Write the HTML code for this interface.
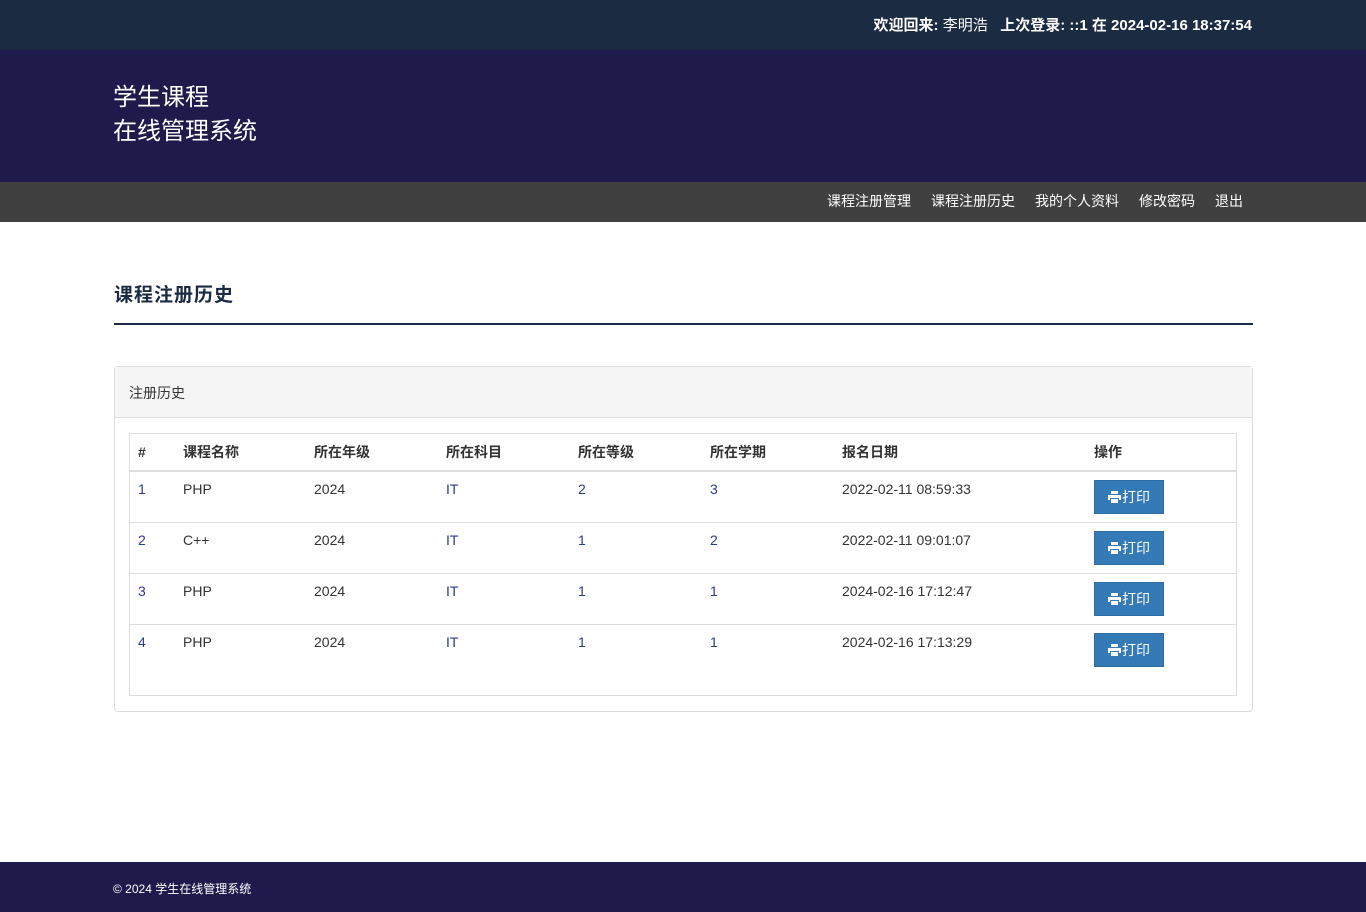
<!DOCTYPE html>
<html><head><meta charset="utf-8"><style>
*{box-sizing:border-box;margin:0;padding:0}
body{width:1366px;height:912px;font-family:"Liberation Sans","Noto Sans CJK SC",sans-serif;font-size:14px;color:#333;background:#fff;position:relative;overflow:hidden}
.top{height:50px;background:#1a2b42;color:#fff;font-size:15px}
.top .r{position:absolute;right:114px;top:14px;font-weight:bold}
.top .r span{font-weight:normal}
.hdr{height:132px;background:#1e1a4b;color:#fff;font-size:24px;line-height:34px;padding:31px 0 0 113px}
.nav{height:40px;background:#404040;color:#fff;font-size:14px;text-align:right;padding-right:123px;line-height:39px}
.nav span{margin-left:20px}
h2{position:absolute;left:114px;top:280px;font-size:19px;color:#1a2b42;font-weight:bold;letter-spacing:1px}
.hr{position:absolute;left:114px;top:323px;width:1139px;height:2px;background:#1a2b42}
.panel{position:absolute;left:114px;top:366px;width:1139px;height:346px;border:1px solid #ddd;border-radius:4px}
.ph{height:51px;background:#f5f5f5;border-bottom:1px solid #ddd;padding:16px 14px;font-size:14px}
.tbl{position:absolute;left:14px;top:66px;width:1108px;height:263px;border:1px solid #ddd}
table{border-collapse:collapse;width:100%}
th{text-align:left;height:37px;border-bottom:2px solid #ddd;padding:0 8px;font-size:14px;color:#333}
td{height:51px;vertical-align:top;padding:9px 8px 0;border-bottom:1px solid #ddd;font-size:14px}
tr:last-child td{border-bottom:none}
.b{color:#2a3a8a}
.btn{display:inline-block;background:#337ab7;border:1px solid #2e6da4;color:#fff;width:70px;height:34px;line-height:32px;text-align:center;margin-top:-1px}
.btn svg{vertical-align:-1px;margin-right:1px}
.foot{position:absolute;left:0;top:862px;width:1366px;height:50px;background:#1e1a4b;color:#fff;font-size:12px;padding:18px 113px}
</style></head><body>
<div class="top"><div class="r">欢迎回来: <span>李明浩</span> &nbsp; 上次登录: ::1 在 2024-02-16 18:37:54</div></div>
<div class="hdr">学生课程<br>在线管理系统</div>
<div class="nav"><span>课程注册管理</span><span>课程注册历史</span><span>我的个人资料</span><span>修改密码</span><span>退出</span></div>
<h2>课程注册历史</h2>
<div class="hr"></div>
<div class="panel"><div class="ph">注册历史</div>
<div class="tbl"><table>
<tr><th style="width:45px">#</th><th style="width:131px">课程名称</th><th style="width:132px">所在年级</th><th style="width:132px">所在科目</th><th style="width:132px">所在等级</th><th style="width:132px">所在学期</th><th style="width:252px">报名日期</th><th>操作</th></tr>
<tr><td class="b">1</td><td>PHP</td><td>2024</td><td class="b">IT</td><td class="b">2</td><td class="b">3</td><td>2022-02-11 08:59:33</td><td><span class="btn"><svg width="13" height="12" viewBox="0 0 13 12"><path d="M3 0h7v3H3zM0 4h13v5h-2V7H2v2H0zM3 8h7v4H3z" fill="#fff"/></svg>打印</span></td></tr>
<tr><td class="b">2</td><td>C++</td><td>2024</td><td class="b">IT</td><td class="b">1</td><td class="b">2</td><td>2022-02-11 09:01:07</td><td><span class="btn"><svg width="13" height="12" viewBox="0 0 13 12"><path d="M3 0h7v3H3zM0 4h13v5h-2V7H2v2H0zM3 8h7v4H3z" fill="#fff"/></svg>打印</span></td></tr>
<tr><td class="b">3</td><td>PHP</td><td>2024</td><td class="b">IT</td><td class="b">1</td><td class="b">1</td><td>2024-02-16 17:12:47</td><td><span class="btn"><svg width="13" height="12" viewBox="0 0 13 12"><path d="M3 0h7v3H3zM0 4h13v5h-2V7H2v2H0zM3 8h7v4H3z" fill="#fff"/></svg>打印</span></td></tr>
<tr><td class="b">4</td><td>PHP</td><td>2024</td><td class="b">IT</td><td class="b">1</td><td class="b">1</td><td>2024-02-16 17:13:29</td><td><span class="btn"><svg width="13" height="12" viewBox="0 0 13 12"><path d="M3 0h7v3H3zM0 4h13v5h-2V7H2v2H0zM3 8h7v4H3z" fill="#fff"/></svg>打印</span></td></tr>
</table></div></div>
<div class="foot">© 2024 学生在线管理系统</div>
</body></html>
